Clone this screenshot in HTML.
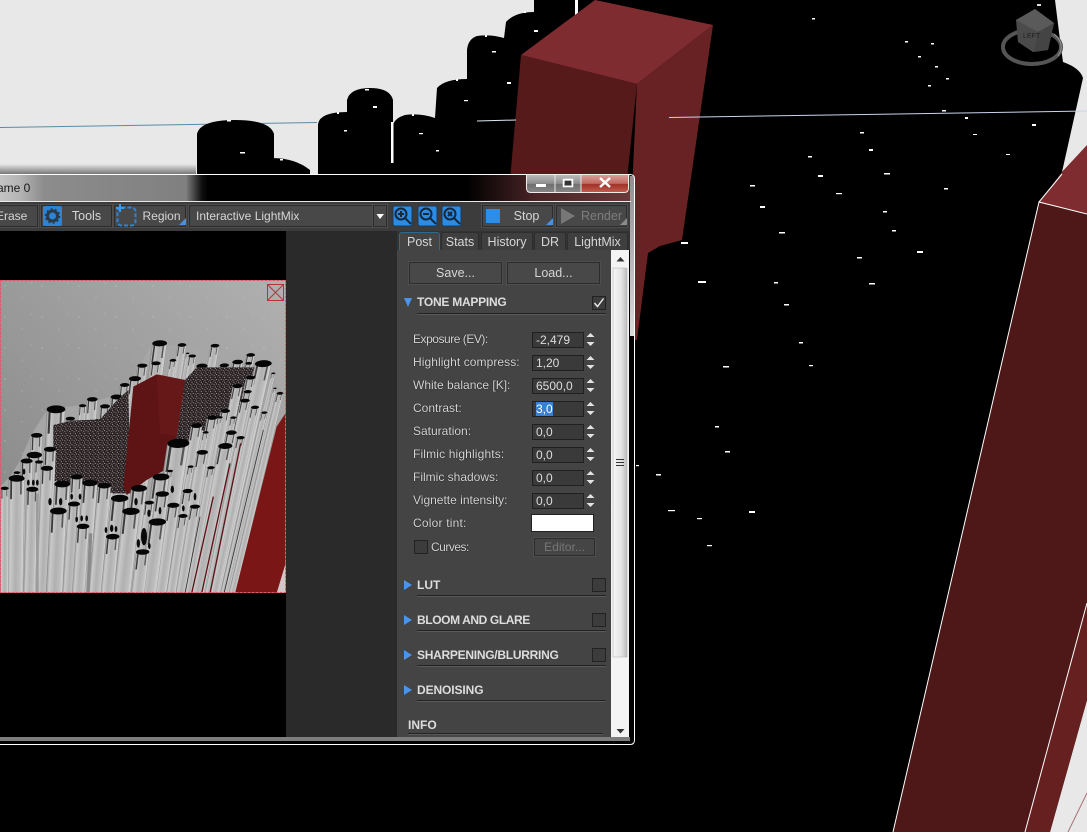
<!DOCTYPE html>
<html><head><meta charset="utf-8"><style>
html,body{margin:0;padding:0;background:#000}
#p{position:relative;width:1087px;height:832px;overflow:hidden;background:#000;font-family:"Liberation Sans",sans-serif;font-size:12.5px;color:#d6d6d6}
#p div{position:absolute;box-sizing:border-box;white-space:nowrap}
svg{position:absolute;left:0;top:0}
.b{background:#484848;border:1px solid #2c2c2c;outline:1px solid #4e4e4e;outline-offset:0;line-height:20px;text-align:center}
.t{background:#3f3f3f;border:1px solid #2e2e2e;border-bottom:none;border-radius:3px 3px 0 0;line-height:18px;text-align:center;top:232px;height:18px}
.l{left:413px;height:16px;line-height:16px;font-size:12px;text-shadow:0 0 1px #000}
.i{left:532px;width:52px;height:16px;background:#3a3a3a;border:1px solid #202020;line-height:15px;padding-left:3px;color:#ddd;font-size:12px}
.h{font-weight:bold;left:417px;height:16px;line-height:16px;font-size:12px;color:#ddd}
.c{left:592px;width:14px;height:14px;background:#3c3c3c;border:1px solid #222}
.n{left:417px;width:189px;height:2px;background:#222;border-bottom:1px solid #5a5a5a}
</style></head><body><div id="p">
<svg width="1087" height="832" viewBox="0 0 1087 832">
<rect width="1087" height="832" fill="#000"/>
<path d="M0 0H534V12Q515 12 506 22L504 38Q490 34 477 36Q468 39 467 50V79Q445 79 437 88L435 118Q420 113 405 115Q395 118 393 125V174H0Z" fill="#e8e8e8"/>
<path d="M1055 0H1087V146L1062 172L1083 78Q1080 68 1063 62L1060 40Z" fill="#e8e8e8"/>
<path d="M1087 700L1050 832H1087Z" fill="#e8e8e8"/>
<defs><linearGradient id="sh" x1="0" y1="0" x2="0" y2="1"><stop offset="0" stop-color="#e8e8e8"/><stop offset="1" stop-color="#777"/></linearGradient></defs>
<rect x="0" y="164" width="196" height="10" fill="url(#sh)"/>
<path d="M0 127.500L317 122.500" stroke="#5b8aa6" stroke-width="1" fill="none"/>
<path d="M197 174V134Q200 120 235 120Q270 120 274 134V174Z" fill="#000"/>
<path d="M272 174V158Q295 158 310 170V174Z" fill="#000"/>
<path d="M318 174V124Q320 112 347 112V100Q350 88 370 88Q390 88 393 100V174Z" fill="#000"/>
<rect x="391" y="122" width="2.500" height="41" fill="#fff"/>
<rect x="575" y="0" width="3" height="18" fill="#fff"/>
<path d="M521 55L595 0L713 25L637 84Z" fill="#7f2c31"/>
<path d="M521 55L637 84L627 180H510Z" fill="#561a1a"/>
<path d="M637 84L713 25L682 240L660 246L648 253L637 340H625Z" fill="#692223"/>
<path d="M477 121L516 120" stroke="#dfe8f4" stroke-width="1"/>
<path d="M669 117.500L1087 111" stroke="#c8d4ee" stroke-width="1"/>
<path d="M1039 203L1087 214V603L1025 832H893Z" fill="#4f1818"/>
<path d="M1039 203L1062 172L1087 145V214Z" fill="#7f2c31"/>
<path d="M1087 603V700L1050 832H1025Z" fill="#65201f"/>
<path d="M1087 214L1039 202L893 832M1039 202L1062 174M1087 603L1025 832" stroke="#fff" stroke-width="1" fill="none"/>
<path d="M1087 793L1068 832" stroke="#a8707a" stroke-width="1"/>
<g fill="#fff">
<rect x="942" y="110" width="4" height="1.500"/><rect x="965" y="117" width="3" height="2"/><rect x="1032" y="124" width="4" height="2"/><rect x="973" y="134" width="4" height="1"/><rect x="860" y="132" width="4" height="1.500"/><rect x="869" y="149" width="4" height="2"/><rect x="808" y="156" width="4" height="1.500"/><rect x="1006" y="154" width="4" height="1"/><rect x="818" y="175" width="5" height="2"/><rect x="884" y="173" width="6" height="1.500"/><rect x="750" y="185" width="5" height="1.500"/><rect x="944" y="188" width="4" height="1.500"/><rect x="836" y="193" width="6" height="1.200"/><rect x="760" y="206" width="5" height="2"/><rect x="883" y="211" width="4" height="1.500"/><rect x="892" y="230" width="4" height="1.500"/><rect x="779" y="232" width="6" height="1.500"/><rect x="681" y="242" width="7" height="2"/><rect x="917" y="251" width="6" height="2"/><rect x="857" y="257" width="5" height="1.500"/><rect x="698" y="281" width="8" height="2"/><rect x="774" y="282" width="4" height="1.500"/><rect x="869" y="283" width="6" height="1.500"/><rect x="784" y="304" width="5" height="1.500"/><rect x="799" y="342" width="4" height="1.500"/><rect x="723" y="366" width="6" height="1.500"/><rect x="809" y="365" width="4" height="1.200"/><rect x="715" y="426" width="4" height="1.500"/><rect x="725" y="451" width="5" height="1.500"/><rect x="636" y="465" width="3" height="1.200"/><rect x="656" y="474" width="5" height="1.500"/><rect x="668" y="510" width="7" height="1.200"/><rect x="697" y="518" width="5" height="1.200"/><rect x="749" y="511" width="6" height="2"/><rect x="707" y="545" width="5" height="1.200"/>
<rect x="812" y="18" width="3" height="1.500"/><rect x="905" y="41" width="3" height="1.500"/><rect x="931" y="43" width="3" height="1.500"/><rect x="918" y="56" width="3" height="1.500"/><rect x="935" y="66" width="3" height="1.500"/><rect x="946" y="78" width="3" height="1.500"/><rect x="928" y="85" width="3" height="1.500"/>
<rect x="227" y="120" width="4" height="1.500"/><rect x="240" y="152" width="5" height="1.500"/><rect x="280" y="159" width="3" height="1.500"/><rect x="337" y="112" width="2" height="2"/><rect x="344" y="130" width="3" height="1.500"/><rect x="365" y="89" width="4" height="1.500"/><rect x="373" y="106" width="4" height="2"/><rect x="412" y="114" width="2" height="2"/><rect x="419" y="133" width="4" height="1.200"/><rect x="436" y="150" width="3" height="1.500"/><rect x="456" y="79" width="2" height="2"/><rect x="464" y="100" width="4" height="1.200"/><rect x="485" y="35" width="2" height="2"/><rect x="492" y="51" width="4" height="1.500"/><rect x="507" y="82" width="4" height="2"/><rect x="524" y="11" width="2" height="2"/><rect x="534" y="30" width="4" height="2"/>
</g>
<ellipse cx="1032" cy="47" rx="29" ry="17" fill="none" stroke="#555" stroke-width="4"/>
<path d="M1054 34Q1066 44 1058 56" stroke="#999" stroke-width="1" fill="none"/>
<path d="M1016 20L1035 9L1054 23L1048 50L1033 52L1018 42Z" fill="#4b4b4b"/>
<path d="M1016 20L1035 9L1054 23L1038 32Z" fill="#5a5a5a"/>
<path d="M1038 32L1054 23L1048 50L1034 52Z" fill="#444"/>
<rect x="1037" y="4" width="4" height="2" fill="#ddd"/>
<text x="1023" y="38" font-size="7" fill="#222" font-family="Liberation Sans">LEFT</text>
<defs>
<linearGradient id="tb" x1="0" y1="0" x2="1" y2="0"><stop offset="0" stop-color="#777"/><stop offset=".05" stop-color="#a8a8a8"/><stop offset=".16" stop-color="#cacaca"/><stop offset=".5" stop-color="#b0b0b0"/><stop offset=".8" stop-color="#bebebe"/><stop offset=".95" stop-color="#d2d2d2"/><stop offset="1" stop-color="#888"/></linearGradient>
<g id="e"><rect x="-.78" y="0" width=".22" height="2.600" fill="#3a3a3a"/><rect x=".45" y="0" width=".2" height="2" fill="#555"/><ellipse cx="0" cy="0" rx="1" ry=".42" fill="#060606"/></g>
<g id="u10"><rect x="-1" y="0" width="2" height="10" fill="url(#tb)"/><use href="#e"/></g>
<g id="u20"><rect x="-1" y="0" width="2" height="20" fill="url(#tb)"/><use href="#e"/></g>
<g id="u40"><rect x="-1" y="0" width="2" height="40" fill="url(#tb)"/><use href="#e"/></g>
<g id="u80"><rect x="-1" y="0" width="2" height="80" fill="url(#tb)"/><use href="#e"/></g>
<g id="u160"><rect x="-1" y="0" width="2" height="160" fill="url(#tb)"/><use href="#e"/></g>
<pattern id="sp" width="14" height="14" patternUnits="userSpaceOnUse"><rect width="14" height="14" fill="#2c2224"/><rect x="5" width="3" height="14" fill="#1c1618"/><circle cx="2" cy="3" r="1.400" fill="#e6e6e6"/><circle cx="9" cy="1" r="1.100" fill="#bbb"/><circle cx="6" cy="8" r="1.400" fill="#f0f0f0"/><circle cx="12" cy="10" r="1.200" fill="#ccc"/><circle cx="1" cy="12" r="1" fill="#999"/></pattern>
<pattern id="no" width="37" height="31" patternUnits="userSpaceOnUse"><circle cx="5" cy="7" r="1" fill="#d8d8d8"/><circle cx="22" cy="19" r="1" fill="#c8c8c8"/><circle cx="31" cy="4" r=".8" fill="#ddd"/></pattern>
<linearGradient id="ig" x1="1" y1="0" x2="0" y2="1"><stop offset="0" stop-color="#b0b0b0"/><stop offset="1" stop-color="#858585"/></linearGradient>
<clipPath id="ic"><rect x="0" y="280" width="286" height="313"/></clipPath>
</defs>
<!-- window frame -->
<rect x="0" y="174" width="634" height="571" rx="4" fill="#000"/>
<defs><linearGradient id="tbar" x1="0" y1="0" x2="1" y2="0"><stop offset="0" stop-color="#c4c4c4"/><stop offset=".03" stop-color="#b5b5b5"/><stop offset=".07" stop-color="#8c8c8c"/><stop offset=".295" stop-color="#808080"/><stop offset=".32" stop-color="#111"/><stop offset=".33" stop-color="#000"/><stop offset=".74" stop-color="#000"/><stop offset=".85" stop-color="#4a2426"/><stop offset="1" stop-color="#6a3a3a"/></linearGradient>
<linearGradient id="rg" x1="0" y1="0" x2="0" y2="1"><stop offset="0" stop-color="#8f8f8f"/><stop offset="1" stop-color="#dcdcdc"/></linearGradient></defs>
<rect x="0" y="175" width="630" height="27" fill="url(#tbar)"/>
<rect x="630" y="176" width="4" height="160" fill="url(#rg)"/>
<path d="M0 174.500H630Q634.500 174.500 634.500 179V740Q634.500 744.500 630 744.500H0" fill="none" stroke="#fff" stroke-width="1"/>
<rect x="0" y="201" width="631" height="1" fill="#e8e8e8"/>
<rect x="0" y="202" width="630" height="29" fill="#3c3c3c"/>
<rect x="0" y="231" width="286" height="506" fill="#000"/>
<rect x="286" y="231" width="111" height="506" fill="#2a2a2a"/>
<rect x="0" y="737" width="630" height="4" fill="#7d7d7d"/>
<rect x="397" y="231" width="233" height="19" fill="#343434"/>
<rect x="397" y="250" width="214" height="487" fill="#444"/>
<rect x="611" y="250" width="18" height="487" fill="#f4f4f4"/>
<defs><linearGradient id="th" x1="0" y1="0" x2="1" y2="0"><stop offset="0" stop-color="#f6f6f6"/><stop offset=".6" stop-color="#e4e4e4"/><stop offset="1" stop-color="#bcbcbc"/></linearGradient></defs>
<rect x="613" y="268" width="14" height="389" fill="url(#th)" stroke="#aaa" stroke-width=".5"/>
<path d="M616 459.500H624M616 462.500H624M616 465.500H624" stroke="#333" stroke-width="1"/>
<path d="M616.500 261.500L620.500 257L624.500 261.500Z M616.500 729L620.500 733.500L624.500 729Z" fill="#333"/>
<!-- render image -->
<g clip-path="url(#ic)">
<rect x="0" y="280" width="286" height="313" fill="url(#ig)"/>
<rect x="0" y="280" width="286" height="313" fill="url(#no)" opacity=".22"/>
<g transform="translate(0 330) scale(.33333)">
<path d="M0 470L30 440L60 392L92 318L140 240L240 225L350 195L400 145L455 40L520 45L640 48L790 98L850 190L860 250V790H0Z" fill="#a6a6a6"/>
<use href="#u40" transform="translate(479 40) skewX(-7.7) scale(22)"/>
<use href="#u80" transform="translate(546 45) skewX(-8.7) scale(13)"/>
<use href="#u80" transform="translate(645 47) skewX(-10.3) scale(13)"/>
<use href="#u160" transform="translate(563 70) skewX(-9) scale(5)"/>
<use href="#u80" transform="translate(752 75) skewX(-12) scale(13)"/>
<use href="#u80" transform="translate(577 78) skewX(-9.2) scale(11)"/>
<use href="#u80" transform="translate(519 91) skewX(-8.3) scale(10)"/>
<use href="#u80" transform="translate(713 96) skewX(-11.4) scale(16)"/>
<use href="#u80" transform="translate(468 100) skewX(-7.5) scale(14)"/>
<use href="#u80" transform="translate(746 100) skewX(-11.9) scale(10)"/>
<use href="#u80" transform="translate(673 106) skewX(-10.8) scale(14)"/>
<use href="#u80" transform="translate(427 107) skewX(-6.8) scale(15)"/>
<use href="#u80" transform="translate(606 108) skewX(-9.7) scale(17)"/>
<use href="#u160" transform="translate(820 130) skewX(-13.1) scale(6)"/>
<use href="#u40" transform="translate(405 146) skewX(-6.5) scale(18)"/>
<use href="#u80" transform="translate(374 165) skewX(-6) scale(14)"/>
<use href="#u40" transform="translate(350 201) skewX(-5.6) scale(18)"/>
<use href="#u40" transform="translate(277 208) skewX(-4.4) scale(16)"/>
<use href="#u80" transform="translate(248 227) skewX(-4) scale(11)"/>
<use href="#u40" transform="translate(315 229) skewX(-5) scale(15)"/>
<use href="#u20" transform="translate(168 238) skewX(-2.7) scale(28)"/>
<use href="#u40" transform="translate(211 266) skewX(-3.4) scale(14)"/>
<use href="#u80" transform="translate(294 272) skewX(-4.7) scale(12)"/>
<use href="#u40" transform="translate(235 280) skewX(-3.8) scale(14)"/>
<use href="#u80" transform="translate(258 284) skewX(-4.1) scale(12)"/>
<path d="M160 285L215 272L300 268L350 212L385 180L392 490L340 490L160 452Z" fill="url(#sp)"/>
<path d="M555 150L590 112L780 112L722 240L700 320L600 300L520 410L495 420L530 320Z" fill="url(#sp)"/>
<path d="M400 170L470 133L555 150L530 320L495 420L440 450L380 495L370 470Z" fill="#5e1414"/>
<path d="M470 133L555 150L530 320L480 310Z" fill="#661818"/>
<use href="#u40" transform="translate(790 101) skewX(-12.6) scale(25)"/>
<use href="#u80" transform="translate(752 143) skewX(-12) scale(14)"/>
<use href="#u80" transform="translate(713 168) skewX(-11.4) scale(15)"/>
<use href="#u160" transform="translate(825 175) skewX(-13.2) scale(5)"/>
<use href="#u80" transform="translate(743 185) skewX(-11.9) scale(12)"/>
<use href="#u80" transform="translate(840 190) skewX(-13.4) scale(10)"/>
<use href="#u80" transform="translate(735 212) skewX(-11.8) scale(14)"/>
<use href="#u80" transform="translate(765 232) skewX(-12.2) scale(12)"/>
<use href="#u40" transform="translate(676 243) skewX(-10.8) scale(14)"/>
<use href="#u80" transform="translate(793 248) skewX(-12.7) scale(9)"/>
<path d="M860 245V690L830 790H705L830 290Z" fill="#7a1616"/>
<path d="M830 790L860 690V800H830Z" fill="#d0c8c8"/>
<use href="#u80" transform="translate(660 262) skewX(-10.6) scale(8)"/>
<use href="#u40" transform="translate(637 263) skewX(-10.2) scale(16)"/>
<use href="#u80" transform="translate(700 263) skewX(-11.2) scale(9)"/>
<use href="#u40" transform="translate(590 287) skewX(-9.4) scale(17)"/>
<use href="#u80" transform="translate(617 307) skewX(-9.9) scale(9)"/>
<use href="#u40" transform="translate(694 308) skewX(-11.1) scale(16)"/>
<use href="#u40" transform="translate(110 316) skewX(-1.8) scale(17)"/>
<use href="#u40" transform="translate(722 323) skewX(-11.6) scale(12)"/>
<use href="#u20" transform="translate(535 340) skewX(-8.6) scale(33)"/>
<use href="#u40" transform="translate(676 348) skewX(-10.8) scale(21)"/>
<use href="#u40" transform="translate(150 358) skewX(-2.4) scale(18)"/>
<use href="#u40" transform="translate(607 367) skewX(-9.7) scale(17)"/>
<use href="#u20" transform="translate(103 375) skewX(-1.6) scale(23)"/>
<use href="#u40" transform="translate(80 393) skewX(-1.3) scale(18)"/>
<use href="#u40" transform="translate(117 396) skewX(-1.9) scale(12)"/>
<use href="#u80" transform="translate(572 410) skewX(-9.2) scale(9)"/>
<use href="#u40" transform="translate(633 413) skewX(-10.1) scale(11)"/>
<use href="#u40" transform="translate(141 415) skewX(-2.3) scale(18)"/>
<use href="#u80" transform="translate(510 423) skewX(-8.2) scale(9)"/>
<use href="#u40" transform="translate(51 428) skewX(-.8) scale(10)"/>
<use href="#u20" transform="translate(230 441) skewX(-3.7) scale(18)"/>
<use href="#u20" transform="translate(483 441) skewX(-7.7) scale(25)"/>
<use href="#u20" transform="translate(50 445) skewX(-.8) scale(24)"/>
<use href="#u20" transform="translate(270 459) skewX(-4.3) scale(23)"/>
<use href="#u20" transform="translate(187 462) skewX(-3) scale(24)"/>
<use href="#u20" transform="translate(313 467) skewX(-5) scale(20)"/>
<use href="#u40" transform="translate(14 475) skewX(-.2) scale(12)"/>
<use href="#u20" transform="translate(417 475) skewX(-6.7) scale(24)"/>
<use href="#u20" transform="translate(97 478) skewX(-1.6) scale(18)"/>
<use href="#u40" transform="translate(563 483) skewX(-9) scale(15)"/>
<use href="#u20" transform="translate(487 492) skewX(-7.8) scale(20)"/>
<use href="#u20" transform="translate(359 505) skewX(-5.7) scale(26)"/>
<use href="#u20" transform="translate(448 518) skewX(-7.2) scale(14)"/>
<use href="#u20" transform="translate(222 522) skewX(-3.6) scale(18)"/>
<use href="#u20" transform="translate(520 526) skewX(-8.3) scale(18)"/>
<use href="#u20" transform="translate(585 530) skewX(-9.4) scale(15)"/>
<use href="#u20" transform="translate(175 543) skewX(-2.8) scale(25)"/>
<use href="#u10" transform="translate(393 544) skewX(-6.3) scale(26)"/>
<use href="#u20" transform="translate(549 558) skewX(-8.8) scale(14)"/>
<use href="#u10" transform="translate(472 576) skewX(-7.6) scale(26)"/>
<use href="#u20" transform="translate(249 589) skewX(-4) scale(19)"/>
<use href="#u10" transform="translate(338 620) skewX(-5.4) scale(20)"/>
<use href="#u10" transform="translate(428 666) skewX(-6.8) scale(20)"/>
<g fill="#0a0a0a"><ellipse cx="72" cy="425" rx="4" ry="9"/><ellipse cx="85" cy="458" rx="4" ry="9"/><ellipse cx="100" cy="458" rx="4" ry="9"/><ellipse cx="112" cy="458" rx="4" ry="9"/><ellipse cx="150" cy="515" rx="5" ry="11"/><ellipse cx="182" cy="515" rx="5" ry="11"/><ellipse cx="215" cy="500" rx="4" ry="9"/><ellipse cx="240" cy="500" rx="4" ry="9"/><ellipse cx="230" cy="568" rx="4" ry="9"/><ellipse cx="245" cy="565" rx="4" ry="9"/><ellipse cx="260" cy="565" rx="4" ry="9"/><ellipse cx="318" cy="600" rx="4" ry="9"/><ellipse cx="335" cy="595" rx="5" ry="11"/><ellipse cx="348" cy="597" rx="4" ry="9"/><ellipse cx="408" cy="515" rx="5" ry="11"/><ellipse cx="415" cy="640" rx="5" ry="13"/><ellipse cx="432" cy="620" rx="9" ry="26"/><ellipse cx="448" cy="648" rx="4" ry="9"/><ellipse cx="447" cy="550" rx="5" ry="11"/><ellipse cx="480" cy="542" rx="4" ry="11"/><ellipse cx="517" cy="478" rx="5" ry="11"/><ellipse cx="550" cy="535" rx="4" ry="9"/><ellipse cx="585" cy="500" rx="4" ry="11"/></g>
<path d="M575 790L640 500M605 790L690 400M630 790L722 340" stroke="#5e1218" stroke-width="4" fill="none"/>
<path d="M555 790L600 560M672 790L790 300" stroke="#333" stroke-width="2.500" fill="none"/>
<path d="M264 790L272 610" stroke="#8a8a8a" stroke-width="10" fill="none"/>
<path d="M112 790V490" stroke="#9c9c9c" stroke-width="8" fill="none"/>
</g>
</g>
<rect x=".5" y="280.500" width="285" height="312" fill="none" stroke="#dd5a68" stroke-width="1" stroke-dasharray="3 1"/>
<rect x="267.500" y="284.500" width="16" height="16" fill="none" stroke="#b8323c"/>
<path d="M268 285L283 300M283 285L268 300" stroke="#b8323c" stroke-width="1"/>
<!-- window buttons -->
<defs><linearGradient id="wb" x1="0" y1="0" x2="0" y2="1"><stop offset="0" stop-color="#bdbdbd"/><stop offset=".5" stop-color="#8e8e8e"/><stop offset=".55" stop-color="#6e6e6e"/><stop offset="1" stop-color="#888"/></linearGradient>
<linearGradient id="wr" x1="0" y1="0" x2="0" y2="1"><stop offset="0" stop-color="#d8a098"/><stop offset=".5" stop-color="#c06a60"/><stop offset=".55" stop-color="#a03228"/><stop offset="1" stop-color="#c05a4c"/></linearGradient></defs>
<path d="M526.500 174.500H628.500V188Q628.500 192.500 624 192.500H531Q526.500 192.500 526.500 188Z" fill="url(#wb)" stroke="#eee"/>
<path d="M581 175H628V188Q628 192 624 192H581Z" fill="url(#wr)"/>
<path d="M555 175V192M581 175V192" stroke="#e6e6e6"/>
<rect x="536" y="184" width="10" height="3" fill="#fff"/>
<rect x="563.500" y="179.500" width="9" height="7" fill="none" stroke="#fff" stroke-width="1.500"/>
<rect x="565" y="181" width="6" height="4" fill="#333"/>
<path d="M600 178L610 187M610 178L600 187" stroke="#fff" stroke-width="2.500"/>
</svg>
<div style="left:-3px;top:180px;line-height:16px;color:#1a1a1a;font-size:12px">ame 0</div>
<!-- toolbar -->
<div class="b" style="left:-5px;top:205px;width:43px;height:22px;text-align:left;font-size:12px">Erase</div>
<div class="b" style="left:41px;top:205px;width:71px;height:22px;padding-left:20px">Tools</div>
<div class="b" style="left:114px;top:205px;width:72px;height:22px;padding-left:23px;font-size:12px">Region</div>
<div class="b" style="left:189px;top:205px;width:184px;height:22px;text-align:left;padding-left:6px;font-size:12px">Interactive LightMix</div>
<div class="b" style="left:373px;top:205px;width:14px;height:22px"></div>
<div class="b" style="left:482px;top:205px;width:71px;height:22px;padding-left:18px">Stop</div>
<div class="b" style="left:556px;top:205px;width:71px;height:22px;padding-left:20px;color:#7e7e7e">Render</div>
<svg width="1087" height="832" viewBox="0 0 1087 832" style="pointer-events:none">
<rect x="43" y="206" width="19" height="20" rx="2" fill="#2b84d6"/>
<circle cx="52.500" cy="216" r="5" fill="none" stroke="#2a3a48" stroke-width="3"/>
<circle cx="52.500" cy="216" r="7" fill="none" stroke="#2a3a48" stroke-width="1.500" stroke-dasharray="2 2.400"/>
<rect x="117.500" y="207.500" width="18" height="18" rx="4" fill="none" stroke="#2b84d6" stroke-width="2" stroke-dasharray="4 2"/>
<path d="M120 204V212M116 208H124" stroke="#3a9aee" stroke-width="2"/>
<path d="M179 225H186V218Z" fill="#4a8ee0"/>
<path d="M546 225H553V218Z" fill="#4a8ee0"/>
<path d="M620 225H627V218Z" fill="#8a8a8a"/>
<path d="M376.500 214H384L380 219Z" fill="#fff"/>
<rect x="393" y="206" width="19" height="20" rx="2" fill="#2b8ce6" stroke="#1b3a58"/>
<rect x="418" y="206" width="19" height="20" rx="2" fill="#2b8ce6" stroke="#1b3a58"/>
<rect x="442" y="206" width="19" height="20" rx="2" fill="#2b8ce6" stroke="#1b3a58"/>
<g fill="none" stroke="#16283a" stroke-width="2"><circle cx="401" cy="214" r="5.500"/><path d="M405 218L411 224M398 214H404M401 211V217"/><circle cx="426" cy="214" r="5.500"/><path d="M430 218L436 224M423 214H429"/><circle cx="450" cy="214" r="5.500"/><path d="M454 218L460 224M448 212L452 216M452 212L448 216"/></g>
<rect x="486" y="209" width="14" height="14" fill="#2c8ee8"/>
<path d="M561 208L575 216L561 224Z" fill="#777"/>
<g fill="#e4e4e4">
<path d="M586.500 337L590.500 333L594.500 337Z M586.500 342L590.500 346L594.500 342Z"/>
<path d="M586.500 360L590.500 356L594.500 360Z M586.500 365L590.500 369L594.500 365Z"/>
<path d="M586.500 383L590.500 379L594.500 383Z M586.500 388L590.500 392L594.500 388Z"/>
<path d="M586.500 406L590.500 402L594.500 406Z M586.500 411L590.500 415L594.500 411Z"/>
<path d="M586.500 429L590.500 425L594.500 429Z M586.500 434L590.500 438L594.500 434Z"/>
<path d="M586.500 452L590.500 448L594.500 452Z M586.500 457L590.500 461L594.500 457Z"/>
<path d="M586.500 475L590.500 471L594.500 475Z M586.500 480L590.500 484L594.500 480Z"/>
<path d="M586.500 498L590.500 494L594.500 498Z M586.500 503L590.500 507L594.500 503Z"/>
</g>
<g fill="#4a94ee"><path d="M404 298H412L408 307Z"/><path d="M404 580V590L412 585Z"/><path d="M404 615V625L412 620Z"/><path d="M404 650V660L412 655Z"/><path d="M404 685V695L412 690Z"/></g>
</svg>
<!-- tabs -->
<div class="t" style="left:399px;width:41px;border-color:#2c6a90;background:#444">Post</div>
<div class="t" style="left:441px;width:38px">Stats</div>
<div class="t" style="left:481px;width:52px">History</div>
<div class="t" style="left:534px;width:32px">DR</div>
<div class="t" style="left:567px;width:61px">LightMix</div>
<div class="b" style="left:409px;top:262px;width:93px;height:22px">Save...</div>
<div class="b" style="left:507px;top:262px;width:93px;height:22px">Load...</div>
<div class="h" style="top:294px;letter-spacing:-.25px">TONE MAPPING</div><div class="n" style="top:313px"></div>
<div class="c" style="top:296px"><svg width="12" height="12" viewBox="0 0 12 12"><path d="M1.500 6L4.500 9.500L10.500 1.500" stroke="#eee" stroke-width="1.400" fill="none"/></svg></div>
<div class="l" style="top:331px;letter-spacing:-.47px">Exposure (EV):</div><div class="i" style="top:332px">-2,479</div>
<div class="l" style="top:354px;letter-spacing:.07px">Highlight compress:</div><div class="i" style="top:355px">1,20</div>
<div class="l" style="top:377px">White balance [K]:</div><div class="i" style="top:378px">6500,0</div>
<div class="l" style="top:400px">Contrast:</div><div class="i" style="top:401px"><span style="background:#3a7fd0;color:#fff">3,0</span></div>
<div class="l" style="top:423px">Saturation:</div><div class="i" style="top:424px">0,0</div>
<div class="l" style="top:446px;letter-spacing:.15px">Filmic highlights:</div><div class="i" style="top:447px">0,0</div>
<div class="l" style="top:469px">Filmic shadows:</div><div class="i" style="top:470px">0,0</div>
<div class="l" style="top:492px">Vignette intensity:</div><div class="i" style="top:493px">0,0</div>
<div class="l" style="top:515px;letter-spacing:.2px">Color tint:</div><div style="left:531px;top:514px;width:63px;height:18px;background:#fff;border:1px solid #222"></div>
<div class="c" style="left:414px;top:540px"></div><div class="l" style="left:431px;top:539px;letter-spacing:-.5px">Curves:</div>
<div class="b" style="left:534px;top:538px;width:61px;height:18px;line-height:16px;color:#777;background:#454545;font-size:12px">Editor...</div>
<div class="h" style="top:577px">LUT</div><div class="n" style="top:595px"></div><div class="c" style="top:578px"></div>
<div class="h" style="top:612px;letter-spacing:-.4px">BLOOM AND GLARE</div><div class="n" style="top:630px"></div><div class="c" style="top:613px"></div>
<div class="h" style="top:647px;letter-spacing:-.27px">SHARPENING/BLURRING</div><div class="n" style="top:665px"></div><div class="c" style="top:648px"></div>
<div class="h" style="top:682px;letter-spacing:-.1px">DENOISING</div><div class="n" style="top:700px"></div>
<div class="h" style="left:408px;top:717px">INFO</div><div class="n" style="left:408px;width:195px;top:733px"></div>
</div></body></html>
